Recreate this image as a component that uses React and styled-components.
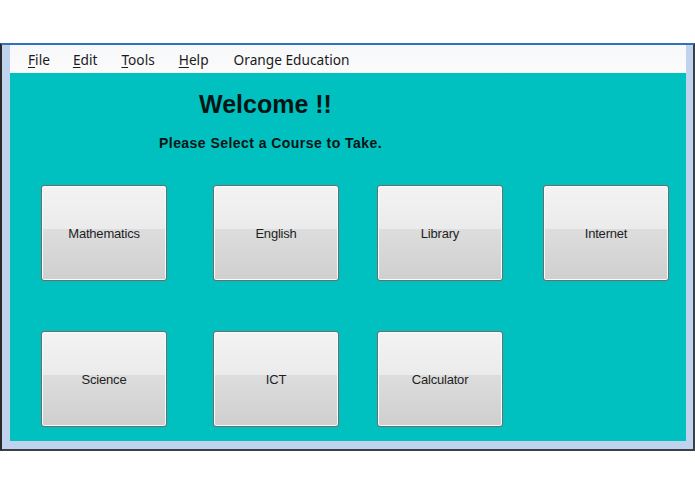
import React from "react";
import styled, { createGlobalStyle } from "styled-components";

const Global = createGlobalStyle`
  html, body { margin: 0; padding: 0; background: #ffffff; }
  body { width: 695px; height: 494px; overflow: hidden; }
`;

const Window = styled.div`
  margin-top: 43px;
  width: 695px;
  box-sizing: border-box;
  border-top: 2px solid #3172b9;
  border-left: 2px solid #2a2a2a;
  border-right: 2px solid #3a3f48;
  border-bottom: 2px solid #3a3f48;
  background: #bfd3ee;
  padding: 0 7px 8px 8px;
  display: flex;
  flex-direction: column;
`;

const MenuBar = styled.div`
  height: 28px;
  display: flex;
  align-items: center;
  padding-left: 18px;
  background: linear-gradient(#f7f8f9, #fbfbfc);
  font-family: "Noto Sans", "Open Sans", sans-serif;
  font-size: 13.7px;
  color: #1b1b1b;
`;

const MenuItem = styled.span`
  margin-right: ${(p) => p.$gap}px;
  white-space: nowrap;
  & u { text-decoration: underline; text-underline-offset: 2px; }
`;

const Content = styled.div`
  height: 368px;
  background: #00c0c0;
  display: flex;
  flex-direction: column;
  align-items: flex-start;
  padding-top: 17px;
  box-sizing: border-box;
  font-family: "Liberation Sans", Arial, sans-serif;
`;

const Title = styled.div`
  margin-left: 189px;
  font-size: 25px;
  line-height: 28px;
  font-weight: bold;
  color: #061414;
`;

const Subtitle = styled.div`
  margin-left: 149px;
  margin-top: 16px;
  font-size: 14px;
  line-height: 18px;
  letter-spacing: 0.45px;
  font-weight: bold;
  color: #061414;
`;

const Grid = styled.div`
  margin-top: 33px;
  margin-left: 31px;
  display: grid;
  grid-template-columns: 172px 164px 166px 125px;
  grid-auto-rows: 95px;
  row-gap: 51px;
`;

const CourseButton = styled.button`
  width: 126px;
  height: 96px;
  box-sizing: border-box;
  border: 1px solid #6c6c6c;
  border-radius: 3px;
  background: linear-gradient(#f3f3f3 0%, #ebebeb 46%, #dddddd 46%, #cfcfcf 100%);
  box-shadow: inset 0 0 0 1px #fbfbfb;
  font-family: "Liberation Sans", Arial, sans-serif;
  font-size: 13px;
  letter-spacing: -0.2px;
  color: #1e1e1e;
  padding: 0;
  cursor: pointer;
`;

const courses = ["Mathematics", "English", "Library", "Internet", "Science", "ICT", "Calculator"];

export default function App() {
  return (
    <>
      <Global />
      <Window>
        <MenuBar>
          <MenuItem $gap={23}><u>F</u>ile</MenuItem>
          <MenuItem $gap={24}><u>E</u>dit</MenuItem>
          <MenuItem $gap={24}><u>T</u>ools</MenuItem>
          <MenuItem $gap={25}><u>H</u>elp</MenuItem>
          <MenuItem $gap={0}>Orange Education</MenuItem>
        </MenuBar>
        <Content>
          <Title>Welcome !!</Title>
          <Subtitle>Please Select a Course to Take.</Subtitle>
          <Grid>
            {courses.map((c) => (
              <CourseButton key={c}>{c}</CourseButton>
            ))}
          </Grid>
        </Content>
      </Window>
    </>
  );
}
